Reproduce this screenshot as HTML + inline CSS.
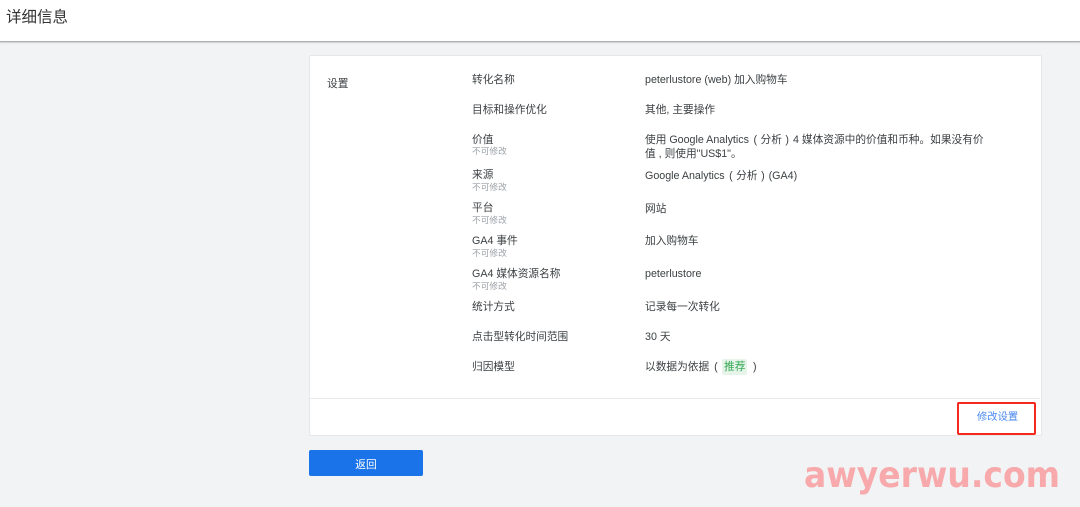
<!DOCTYPE html>
<html lang="zh"><head><meta charset="utf-8"><title>详细信息</title>
<style>
html,body{margin:0;padding:0;width:1080px;height:507px;overflow:hidden;background:#f1f3f4}
body{position:relative;font-family:"Liberation Sans","Noto Sans CJK SC",sans-serif;color:#3c4043}
.t{position:absolute;white-space:nowrap;font-size:10.7px;line-height:14px;filter:blur(.3px)}
.s{position:absolute;white-space:nowrap;font-size:8.7px;line-height:11px;color:#9aa0a6;filter:blur(.3px)}
.o{margin:0 3.5px 0 4.5px}
.c{margin:0 4px 0 3.5px}
#hd{position:absolute;left:0;top:0;width:1080px;height:41px;background:#fff;border-bottom:1px solid #aeb0b2;box-shadow:0 1px 1px rgba(0,0,0,.15)}
#card{position:absolute;left:309px;top:55px;width:731px;height:379px;background:#fff;border:1px solid #e6e7e9;border-radius:2px}
#line{position:absolute;left:310px;top:398px;width:730px;height:1px;background:#e8eaed}
#btn{position:absolute;left:309px;top:450px;width:114px;height:26px;background:#1a73e8;border-radius:2px}
#btnt{position:absolute;left:309px;top:458px;width:114px;color:#fff;font-size:10.7px;line-height:14px;text-align:center;filter:blur(.3px)}
#red{position:absolute;left:957px;top:402px;width:75px;height:29px;border:2px solid #f5281e;border-radius:2px}
#tag{position:absolute;left:722px;top:359px;width:25px;height:16px;background:#e6f4ea;border-radius:2px}
svg{position:absolute;left:0;top:0}
</style></head><body>
<div id="hd"></div>
<div class="t" style="left:6px;top:8px;font-size:15.5px;line-height:20px;color:#333">详细信息</div>
<div id="card"></div><div id="line"></div>
<div class="t" style="left:327px;top:77px">设置</div>

<div class="t" style="left:472px;top:73px">转化名称</div>
<div class="t" style="left:645px;top:73px">peterlustore (web) 加入购物车</div>
<div class="t" style="left:472px;top:103px">目标和操作优化</div>
<div class="t" style="left:645px;top:103px">其他, 主要操作</div>
<div class="t" style="left:472px;top:133px">价值</div>
<div class="s" style="left:472px;top:146px">不可修改</div>
<div class="t" style="left:645px;top:133px">使用 Google Analytics<span class="o">(</span>分析<span class="c">)</span>4 媒体资源中的价值和币种。如果没有价</div>
<div class="t" style="left:645px;top:147px">值 , 则使用"US$1"。</div>
<div class="t" style="left:472px;top:168px">来源</div>
<div class="s" style="left:472px;top:182px">不可修改</div>
<div class="t" style="left:645px;top:169px">Google Analytics<span class="o">(</span>分析<span class="c">)</span>(GA4)</div>
<div class="t" style="left:472px;top:201px">平台</div>
<div class="s" style="left:472px;top:215px">不可修改</div>
<div class="t" style="left:645px;top:202px">网站</div>
<div class="t" style="left:472px;top:234px">GA4 事件</div>
<div class="s" style="left:472px;top:248px">不可修改</div>
<div class="t" style="left:645px;top:234px">加入购物车</div>
<div class="t" style="left:472px;top:267px">GA4 媒体资源名称</div>
<div class="s" style="left:472px;top:281px">不可修改</div>
<div class="t" style="left:645px;top:267px">peterlustore</div>
<div class="t" style="left:472px;top:300px">统计方式</div>
<div class="t" style="left:645px;top:300px">记录每一次转化</div>
<div class="t" style="left:472px;top:330px">点击型转化时间范围</div>
<div class="t" style="left:645px;top:330px">30 天</div>
<div class="t" style="left:472px;top:360px">归因模型</div>
<div class="t" style="left:645px;top:360px">以数据为依据 <span style="margin-left:2px">(</span></div>
<div id="tag"></div>
<div class="t" style="left:724px;top:360px;color:#34a853">推荐</div>
<div class="t" style="left:753px;top:360px">)</div>

<div class="t" style="left:977px;top:411px;color:#4a8af0;font-size:10.3px">修改设置</div>
<div id="red"></div>
<div id="btn"></div>
<div id="btnt">返回</div>
<svg width="1080" height="507"><text x="804" y="487" font-family="DejaVu Sans" font-size="36" font-weight="700" fill="#f8a9ab" textLength="256" lengthAdjust="spacingAndGlyphs">awyerwu.com</text></svg>
</body></html>
